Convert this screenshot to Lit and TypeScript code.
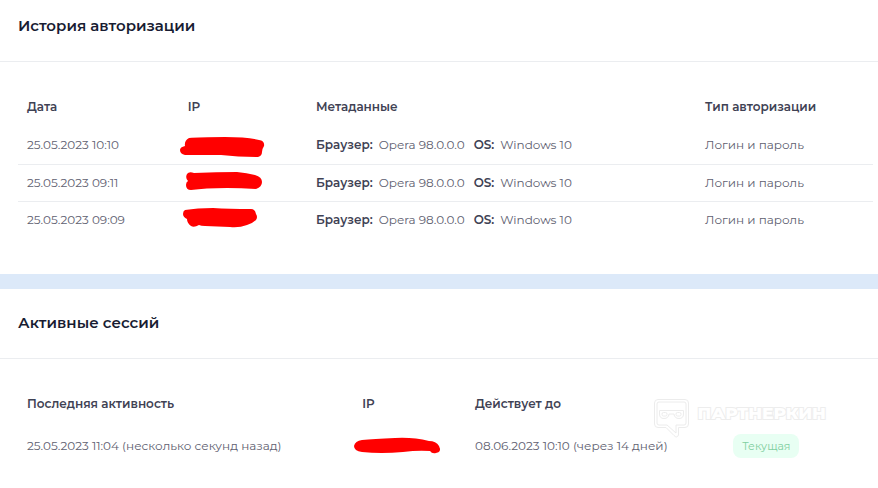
import { LitElement, html, css, svg } from "lit";
import { customElement, property } from "lit/decorators.js";

interface AuthRecord {
  date: string;
  mask: string;
  browser: string;
  os: string;
  type: string;
}

interface Session {
  activity: string;
  mask: string;
  expires: string;
  status: string;
}

const history: AuthRecord[] = [
  {
    date: "25.05.2023 10:10",
    mask: "M10 5Q20 4 46 4Q68 4 80 7Q86 8 85 13Q83 16 83 19Q83 23 79 24Q60 24 42 22L6 22Q1 21 1 17Q1 14 6 13Q5 8 10 5Z",
    browser: "Opera 98.0.0.0",
    os: "Windows 10",
    type: "Логин и пароль",
  },
  {
    date: "25.05.2023 09:11",
    mask: "M8 3Q10 0 15 2Q38 1 58 1Q68 2 76 4Q83 6 83 11Q83 16 77 18Q62 17 48 17Q26 17 12 19Q7 19 7 14Q7 11 9 10Q6 7 8 3Z",
    browser: "Opera 98.0.0.0",
    os: "Windows 10",
    type: "Логин и пароль",
  },
  {
    date: "25.05.2023 09:09",
    mask: "M6 2Q18 0 34 0Q50 1 72 1Q76 1 77 6Q79 9 77 12Q74 15 68 17Q60 20 51 19L26 18Q22 18 20 17Q15 20 12 18Q8 15 8 11Q4 9 4 6Q4 3 6 2Z",
    browser: "Opera 98.0.0.0",
    os: "Windows 10",
    type: "Логин и пароль",
  },
];

const sessions: Session[] = [
  {
    activity: "25.05.2023 11:04 (несколько секунд назад)",
    mask: "M9 6Q20 5 42 4Q60 3 76 7Q83 7 86 12Q89 18 83 19Q79 20 77 17Q65 16 50 18Q28 20 9 18Q1 17 1 12Q2 7 9 6Z",
    expires: "08.06.2023 10:10 (через 14 дней)",
    status: "Текущая",
  },
];

@customElement("ip-mask")
export class IpMask extends LitElement {
  @property() shape = "";

  static styles = css`
    :host {
      display: block;
    }
    .mask {
      display: block;
      width: 100px;
      height: 24px;
      overflow: visible;
      fill: #ff0000;
    }
  `;

  render() {
    return html`<svg class="mask" viewBox="0 0 100 24" role="img" aria-label="IP">
      ${svg`<path d=${this.shape}></path>`}
    </svg>`;
  }
}

@customElement("brand-mark")
export class BrandMark extends LitElement {
  static styles = css`
    :host {
      display: flex;
      gap: 8px;
      pointer-events: none;
    }
    .logo {
      width: 36px;
      height: 40px;
      fill: none;
      stroke: #ececec;
      stroke-width: 1;
    }
    .name {
      font-size: 17px;
      line-height: 28px;
      font-weight: 800;
      color: #ffffff;
      -webkit-text-stroke: 2px #ededed;
      paint-order: stroke fill;
    }
  `;

  render() {
    return html`
      <svg class="logo" viewBox="0 0 36 40" aria-hidden="true">
        <path d="M4 .5H31Q34.500 .5 34.500 4V25Q34.500 28.500 31 28.500H24.500V36Q23 39.500 20 36.500L12 28.500H4Q.5 28.500 .5 25V4Q.5 .5 4 .5Z"></path>
        <path d="M5 3H30Q32 3 32 5V24Q32 26 30 26H22V34L13 26H5Q3 26 3 24V5Q3 3 5 3Z"></path>
        <path d="M5.500 11.500H29.500V15Q29.500 19.500 25 19.500Q20.500 19.500 20 15H15Q14.500 19.500 10 19.500Q5.500 19.500 5.500 15Z"></path>
        <rect x="8" y="13.500" width="5" height="3.500" rx="1.500"></rect>
        <rect x="22" y="13.500" width="5" height="3.500" rx="1.500"></rect>
      </svg>
      <span class="name">ПАРТНЕРКИН</span>
    `;
  }
}

@customElement("app-root")
export class AppRoot extends LitElement {
  static styles = css`
    :host {
      display: block;
      min-height: 100vh;
      background: #ffffff;
      color: #3f4254;
      font-family: Montserrat, Inter, "Noto Sans", sans-serif;
      font-size: 12px;
      line-height: 20px;
    }
    .card {
      position: relative;
      background: #ffffff;
    }
    .card + .card {
      border-top: 15px solid #dce9f9;
    }
    .head {
      padding: 22px 18px 23px;
      border-bottom: 1px solid #ebedf0;
    }
    .first .head {
      padding-top: 14px;
    }
    .title {
      margin: 0;
      font-size: 15px;
      line-height: 24px;
      font-weight: 600;
      color: #181c32;
    }
    .body {
      padding: 25px 5px 36px 18px;
    }
    .grid {
      width: 100%;
      table-layout: fixed;
      border-collapse: collapse;
    }
    th,
    td {
      box-sizing: border-box;
      padding: 0 9px;
      text-align: left;
      white-space: nowrap;
    }
    th {
      height: 40px;
      font-weight: 600;
    }
    td {
      height: 37px;
      color: #5e6070;
      font-weight: 400;
    }
    .sessions td {
      height: 44px;
    }
    tbody tr + tr {
      border-top: 1px solid #ebedf0;
    }
    td.ip {
      padding: 0;
    }
    .h-date {
      width: 18.8%;
    }
    .h-ip {
      width: 15%;
    }
    .h-meta {
      width: 45.5%;
    }
    .s-activity {
      width: 39.2%;
    }
    .s-ip {
      width: 13.2%;
    }
    .s-expires {
      width: 30.2%;
    }
    .meta {
      display: flex;
      gap: 6px;
    }
    .key {
      color: #3f4254;
      font-weight: 600;
    }
    .value + .key {
      margin-left: 3px;
    }
    .badge {
      display: inline-block;
      padding: 2px 9px;
      border-radius: 8px;
      background: #e8fff3;
      color: #7fcfa0;
      font-size: 11px;
      font-weight: 400;
      vertical-align: middle;
    }
    .brand {
      position: absolute;
      top: 110px;
      right: 52px;
    }
  `;

  render() {
    return html`
      <section class="card first">
        <header class="head"><h2 class="title">История авторизации</h2></header>
        <div class="body">
          <table class="grid">
            <thead>
              <tr>
                <th class="h-date">Дата</th>
                <th class="h-ip">IP</th>
                <th class="h-meta">Метаданные</th>
                <th>Тип авторизации</th>
              </tr>
            </thead>
            <tbody>
              ${history.map(
                (r) => html`<tr>
                  <td>${r.date}</td>
                  <td class="ip"><ip-mask .shape=${r.mask}></ip-mask></td>
                  <td>
                    <div class="meta">
                      <span class="key">Браузер:</span><span class="value">${r.browser}</span>
                      <span class="key">OS:</span><span class="value">${r.os}</span>
                    </div>
                  </td>
                  <td>${r.type}</td>
                </tr>`
              )}
            </tbody>
          </table>
        </div>
      </section>
      <section class="card">
        <header class="head"><h2 class="title">Активные сессий</h2></header>
        <div class="body">
          <table class="grid sessions">
            <thead>
              <tr>
                <th class="s-activity">Последняя активность</th>
                <th class="s-ip">IP</th>
                <th class="s-expires">Действует до</th>
                <th></th>
              </tr>
            </thead>
            <tbody>
              ${sessions.map(
                (s) => html`<tr>
                  <td>${s.activity}</td>
                  <td class="ip"><ip-mask .shape=${s.mask}></ip-mask></td>
                  <td>${s.expires}</td>
                  <td><span class="badge">${s.status}</span></td>
                </tr>`
              )}
            </tbody>
          </table>
        </div>
        <brand-mark class="brand"></brand-mark>
      </section>
    `;
  }
}
